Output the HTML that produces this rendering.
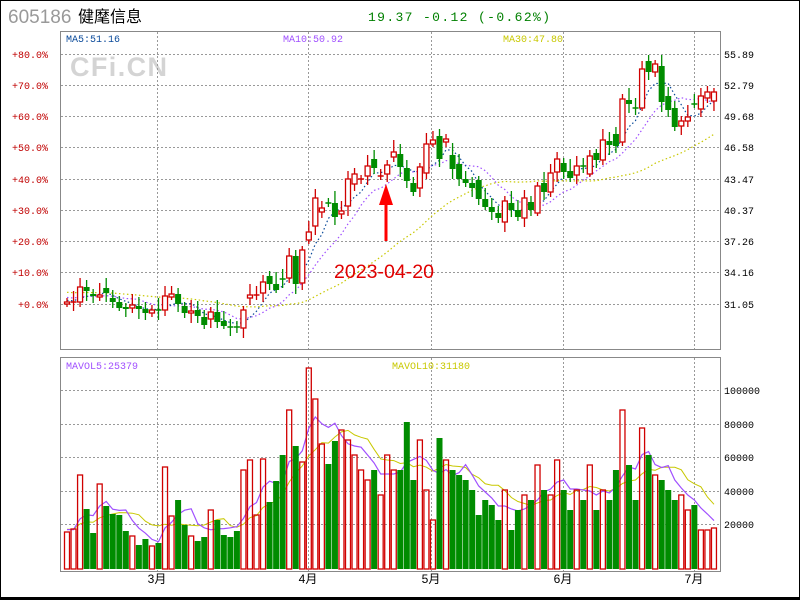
<!DOCTYPE html>
<html><head><meta charset="utf-8"><style>
body{margin:0;background:#fff;}
#w{position:relative;width:800px;height:600px;overflow:hidden;font-family:"Liberation Mono",monospace;}
</style></head><body><div id="w">
<svg id="s" width="800" height="600" xmlns="http://www.w3.org/2000/svg" font-family="Liberation Mono, monospace">
<rect x="0.5" y="0.5" width="799" height="597" fill="#fff" stroke="#000"/>
<line x1="0" y1="598.5" x2="800" y2="598.5" stroke="#000" stroke-width="3"/>
<text x="8" y="23" font-family="Liberation Sans,sans-serif" font-size="19" fill="#999">605186</text>
<text x="78" y="22" font-family="Liberation Sans,'Noto Sans CJK SC',sans-serif" font-size="16" fill="#000">健麾信息</text>
<text x="368" y="21" font-size="13" fill="#008000" textLength="182" lengthAdjust="spacing">19.37 -0.12 (-0.62%)</text>
<text x="70" y="76" font-family="Liberation Sans,sans-serif" font-weight="bold" font-size="27" fill="#d4d4d4" textLength="97">CFi.CN</text>
<g id="grid"></g>
<rect x="60.5" y="31.5" width="660" height="318" fill="none" stroke="#888"/>
<rect x="60.5" y="357.5" width="660" height="214" fill="none" stroke="#888"/>
<text x="66" y="42" font-size="10" fill="#0a4a9a">MA5:51.16</text>
<text x="283" y="42" font-size="10" fill="#a050ff">MA10:50.92</text>
<text x="503" y="42" font-size="10" fill="#c8c800">MA30:47.80</text>
<text x="66" y="369" font-size="10" fill="#a050ff">MAVOL5:25379</text>
<text x="392" y="369" font-size="10" fill="#c8c800">MAVOL10:31180</text>
<g id="c"></g>
<text x="334" y="278" font-family="Liberation Sans,sans-serif" font-size="19" fill="#e00000" textLength="100" lengthAdjust="spacingAndGlyphs" style="font-weight:normal">2023-04-20</text>
<line x1="386" y1="241" x2="386" y2="200" stroke="#f00" stroke-width="3"/>
<polygon points="386,184 379,205 393,205" fill="#f00"/>
</svg>
<script>
var D=[["r",302,304],["r",302,303],["r",287,302],["g",287,291],["g",294,296],["r",295,297],["g",288,293],["g",298,302],["g",302,308],["g",307,309],["r",305,308],["g",306,309],["g",309,313],["r",310,313],["g",310,311],["r",296,310],["r",294,297],["g",294,304],["g",306,313],["r",311,313],["g",310,316],["g",317,325],["r",312,319],["g",312,322],["g",321,326],["g",327,328],["g",327,328],["r",310,328],["r",295,298],["r",295,296],["r",282,293],["g",276,284],["g",284,290],["g",279,280],["r",256,278],["g",256,284],["r",250,283],["r",232,240],["r",198,226],["r",208,212],["g",203,204],["g",203,217],["r",211,214],["r",179,206],["r",174,184],["r",179,180],["r",166,176],["g",159,168],["r",176,177],["r",165,174],["r",152,157],["g",154,167],["g",168,181],["g",183,192],["r",167,188],["r",144,173],["r",140,144],["g",136,159],["r",139,142],["g",155,169],["g",164,179],["g",179,183],["g",183,188],["g",180,199],["g",199,207],["g",207,212],["g",213,218],["r",201,222],["g",203,210],["g",210,217],["r",198,218],["g",202,210],["r",186,213],["g",183,192],["r",173,192],["r",159,172],["g",163,172],["g",171,178],["r",166,175],["g",166,167],["r",156,174],["g",153,160],["r",140,160],["g",141,145],["g",134,146],["r",99,142],["g",100,104],["g",108,109],["r",69,108],["g",61,72],["r",64,72],["g",66,102],["g",96,110],["g",108,127],["r",121,126],["r",117,121],["g",104,105],["r",96,109],["r",92,98],["r",92,101]];
var V=[532,529,475,509,533,484,506,514,515,531,536,545,539,546,543,467,516,500,525,536,541,537,510,520,535,537,531,470,460,515,459,502,481,455,410,446,462,368,399,444,464,441,430,440,455,470,480,470,495,455,470,470,422,480,440,490,520,438,460,470,475,480,490,515,500,505,520,490,530,510,495,500,465,490,495,460,490,510,490,500,465,510,490,500,470,410,465,500,428,455,475,480,490,500,495,510,505,530,530,528];
var h="";
function X(i){return 67+i*6.535;}
var g="";[54,85,116,147,179,210,241,272,304].forEach(function(y){g+='<line x1="61" x2="720" y1="'+(y+.5)+'" y2="'+(y+.5)+'" stroke="#999" stroke-dasharray="2,2"/>';});
[390,424,457,491,524].forEach(function(y){g+='<line x1="61" x2="720" y1="'+(y+.5)+'" y2="'+(y+.5)+'" stroke="#999" stroke-dasharray="2,2"/>';});
[157,308,431,563,694].forEach(function(x){g+='<line x1="'+(x+.5)+'" x2="'+(x+.5)+'" y1="32" y2="350" stroke="#999" stroke-dasharray="2,2"/><line x1="'+(x+.5)+'" x2="'+(x+.5)+'" y1="358" y2="572" stroke="#999" stroke-dasharray="2,2"/>';});
var L=["+80.0%","+70.0%","+60.0%","+50.0%","+40.0%","+30.0%","+20.0%","+10.0%","+0.0%"],R=["55.89","52.79","49.68","46.58","43.47","40.37","37.26","34.16","31.05"];
[54,85,116,147,179,210,241,272,304].forEach(function(y,k){g+='<text x="48" y="'+(y+4)+'" text-anchor="end" font-size="10" fill="#c00000">'+L[k]+'</text><text x="724" y="'+(y+4)+'" font-size="10" fill="#000">'+R[k]+'</text>';});
[["100000",390],["80000",424],["60000",457],["40000",491],["20000",524]].forEach(function(a){g+='<text x="724" y="'+(a[1]+4)+'" font-size="10" fill="#000">'+a[0]+'</text>';});
[["3月",157],["4月",308],["5月",431],["6月",563],["7月",694]].forEach(function(a){g+='<text x="'+a[1]+'" y="583" text-anchor="middle" font-family="Liberation Sans,Noto Sans CJK SC,sans-serif" font-size="12" fill="#000">'+a[0]+'</text>';});
document.getElementById("grid").innerHTML=g;
var C=D.map(function(d){return d[0]=="r"?d[1]:d[2];});
function ma(arr,n,pre){var o=[];for(var i=0;i<arr.length;i++){var s=0,c=0;for(var j=Math.max(0,i-n+1);j<=i;j++){s+=arr[j];c++;}var a=s/c;if(pre!=null&&c<n)a=(a*c+pre*(n-c))/n;o.push(a);}return o;}
function pl(a,col,dash,w){var p=a.map(function(v,i){return X(i).toFixed(1)+","+v.toFixed(1);}).join(" ");return '<polyline points="'+p+'" fill="none" stroke="'+col+'" stroke-width="'+(w||1.2)+'"'+(dash?' stroke-dasharray="'+dash+'"':'')+'/>';}
h+=pl(ma(C,30,292),"#c8c800","1.5,2.5");h+=pl(ma(C,10,297),"#a050ff","1.5,2.5");h+=pl(ma(C,5,300),"#0a4a9a","1.5,2.5");
var vh=V.map(function(v){return 569-v;});
h+=pl(ma(vh,10,40).map(function(v){return 569-v;}),"#c8c800",null,1);
h+=pl(ma(vh,5,40).map(function(v){return 569-v;}),"#a050ff",null,1.2);
D.forEach(function(d,i){var x=X(i),t=d[1],b=d[2],hi=t-4-(i*7%9),lo=b+3+(i*5%8);var col=d[0]=="r"?"#d00000":"#008c00";
h+='<line x1="'+x+'" x2="'+x+'" y1="'+hi+'" y2="'+lo+'" stroke="'+col+'" stroke-width="1.3"/>';
if(b-t<1.5)h+='<line x1="'+(x-3)+'" x2="'+(x+3)+'" y1="'+t+'" y2="'+t+'" stroke="'+col+'" stroke-width="1.5"/>';
else if(d[0]=="r")h+='<rect x="'+(x-2.5)+'" y="'+t+'" width="5" height="'+(b-t)+'" fill="#fff" stroke="'+col+'" stroke-width="1.3"/>';
else h+='<rect x="'+(x-3)+'" y="'+t+'" width="6" height="'+(b-t)+'" fill="'+col+'"/>';
var v=V[i];if(d[0]=="r")h+='<rect x="'+(x-2.5)+'" y="'+v+'" width="5" height="'+(569-v)+'" fill="none" stroke="#d00000" stroke-width="1.3"/>';
else h+='<rect x="'+(x-3)+'" y="'+v+'" width="6" height="'+(569-v)+'" fill="#008c00"/>';});
document.getElementById("c").innerHTML=h;
</script>
</div></body></html>
